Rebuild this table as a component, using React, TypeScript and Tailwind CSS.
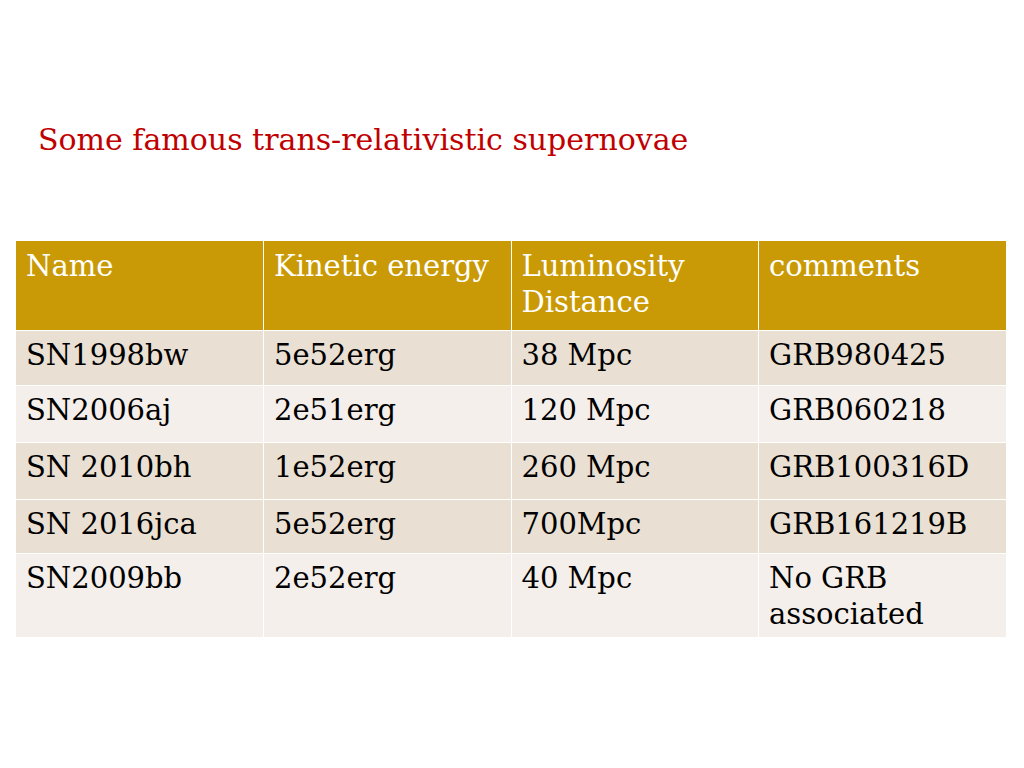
const header = ["Name", "Kinetic energy", "Luminosity Distance", "comments"];

const rows = [
  { cells: ["SN1998bw", "5e52erg", "38 Mpc", "GRB980425"], bg: "bg-[#e9dfd2]", h: "h-[55px]" },
  { cells: ["SN2006aj", "2e51erg", "120 Mpc", "GRB060218"], bg: "bg-[#f4efea]", h: "h-[57px]" },
  { cells: ["SN 2010bh", "1e52erg", "260 Mpc", "GRB100316D"], bg: "bg-[#e9dfd2]", h: "h-[57px]" },
  { cells: ["SN 2016jca", "5e52erg", "700Mpc", "GRB161219B"], bg: "bg-[#e9dfd2]", h: "h-[54px]" },
  { cells: ["SN2009bb", "2e52erg", "40 Mpc", "No GRB associated"], bg: "bg-[#f4efea]", h: "h-[84px]" },
];

export default function App() {
  return (
    <div className="h-[768px] w-[1024px] bg-white font-['DejaVu_Serif',serif]">
      <div className="pl-[38px] pt-[120px]">
        <h1 className="text-[30px] leading-[40px] text-[#c00000]">
          Some famous trans-relativistic supernovae
        </h1>
      </div>

      <table className="ml-[16px] mt-[81px] w-[990px] table-fixed border-collapse text-[29px] leading-[36px]">
        <thead>
          <tr className="h-[89px] bg-[#c99a05] align-top text-white">
            {header.map((h) => (
              <th
                key={h}
                className="border-r border-white px-[10px] pt-[7px] text-left font-normal last:border-r-0"
              >
                {h}
              </th>
            ))}
          </tr>
        </thead>
        <tbody className="text-black">
          {rows.map((r) => (
            <tr key={r.cells[0]} className={`align-top ${r.bg} ${r.h}`}>
              {r.cells.map((c, j) => (
                <td
                  key={j}
                  className="border-r border-t border-white px-[10px] pt-[6px] last:border-r-0"
                >
                  {c}
                </td>
              ))}
            </tr>
          ))}
        </tbody>
      </table>
    </div>
  );
}
